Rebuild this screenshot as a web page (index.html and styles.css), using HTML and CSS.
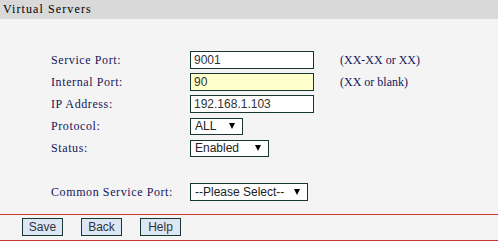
FILE: index.html
```html
<!DOCTYPE html>
<html lang="en">
<head>
    <meta charset="UTF-8">
    <title>Virtual Servers</title>
    <link rel="stylesheet" href="styles.css">
</head>
<body>

<header class="title-bar">Virtual Servers</header>

<form class="vs-form">
    <div class="row">
        <label class="field-label" for="svcPort">Service Port:</label>
        <input type="text" id="svcPort" class="text-input" value="9001">
        <span class="hint">(XX-XX or XX)</span>
    </div>
    <div class="row">
        <label class="field-label" for="intPort">Internal Port:</label>
        <input type="text" id="intPort" class="text-input focused" value="90">
        <span class="hint">(XX or blank)</span>
    </div>
    <div class="row">
        <label class="field-label" for="ip">IP Address:</label>
        <input type="text" id="ip" class="text-input" value="192.168.1.103">
    </div>
    <div class="row">
        <label class="field-label" for="protocol">Protocol:</label>
        <span class="select-wrap">
            <select id="protocol" class="select-box sel-protocol">
                <option>ALL</option>
                <option>TCP</option>
                <option>UDP</option>
            </select>
        </span>
    </div>
    <div class="row">
        <label class="field-label" for="status">Status:</label>
        <span class="select-wrap">
            <select id="status" class="select-box sel-status">
                <option>Enabled</option>
                <option>Disabled</option>
            </select>
        </span>
    </div>
    <div class="row"></div>
    <div class="row">
        <label class="field-label" for="common">Common Service Port:</label>
        <span class="select-wrap">
            <select id="common" class="select-box sel-common">
                <option>--Please Select--</option>
                <option>DNS</option>
                <option>FTP</option>
                <option>HTTP</option>
            </select>
        </span>
    </div>
</form>

<div class="button-bar">
    <button type="button" class="btn">Save</button>
    <button type="button" class="btn">Back</button>
    <button type="button" class="btn">Help</button>
</div>

</body>
</html>
```

FILE: styles.css
```css
* {
    margin: 0;
    padding: 0;
    box-sizing: border-box;
}
body {
    background-color: #f4f4f4;
    font-family: 'Liberation Sans', Arial, sans-serif;
    font-size: 12px;
    color: #222;
}
.title-bar {
    height: 19px;
    line-height: 19px;
    background-color: #d9d9d9;
    padding-left: 3px;
    font-family: 'Liberation Serif', serif;
    font-size: 12px;
    letter-spacing: 1.1px;
    color: #000;
}
.vs-form {
    padding-top: 30px;
    padding-left: 51px;
}
.row {
    display: grid;
    grid-template-columns: 139px 150px auto;
    align-items: center;
    height: 22px;
}
.field-label, .hint {
    font-family: 'Liberation Serif', serif;
    font-size: 12px;
    color: #14145a;
}
.field-label {
    letter-spacing: 0.6px;
}
.text-input {
    width: 124px;
    height: 18px;
    border: 1px solid #17382f;
    padding: 0 0 0 3px;
    background-color: #fff;
    font-family: 'Liberation Sans', Arial, sans-serif;
    font-size: 12px;
    color: #333;
    outline: none;
}
.text-input.focused {
    background-color: #ffffcc;
}
.select-wrap {
    position: relative;
    display: inline-block;
    justify-self: start;
}
.select-wrap::after {
    content: '';
    position: absolute;
    right: 8px;
    top: 50%;
    margin-top: -3px;
    border-left: 3px solid transparent;
    border-right: 3px solid transparent;
    border-top: 6px solid #000;
    pointer-events: none;
}
.select-box {
    display: block;
    appearance: none;
    -webkit-appearance: none;
    height: 17px;
    border: 1px solid #17382f;
    border-radius: 0;
    padding: 0 0 0 4px;
    background-color: #fff;
    font-family: 'Liberation Sans', Arial, sans-serif;
    font-size: 12px;
    color: #222;
    outline: none;
}
.sel-protocol {
    width: 53px;
}
.sel-status {
    width: 79px;
}
.sel-common {
    width: 118px;
    height: 18px;
}
.button-bar {
    display: flex;
    gap: 18px;
    margin-top: 11px;
    height: 27px;
    padding: 3px 0 0 22px;
    border-top: 1px solid #c8382c;
    border-bottom: 1px solid #c8382c;
}
.btn {
    width: 41px;
    height: 18px;
    background-color: #dde6f4;
    border: 1px solid #17382f;
    font-family: 'Liberation Sans', Arial, sans-serif;
    font-size: 12px;
    color: #333;
    cursor: pointer;
}
```
